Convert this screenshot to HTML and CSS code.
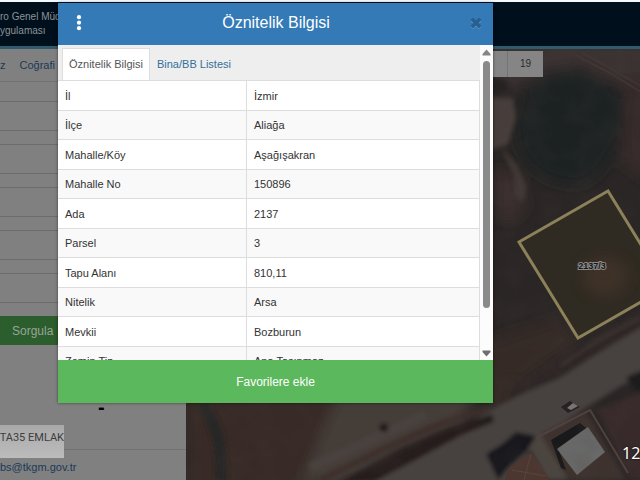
FILE: index.html
```html
<!DOCTYPE html>
<html lang="tr">
<head>
    <meta charset="UTF-8">
    <meta name="viewport" content="width=device-width, initial-scale=1.0">
    <title>Öznitelik Bilgisi</title>
    <link rel="stylesheet" href="styles.css">
</head>
<body>
    <div class="page">
        <header class="site-header">
            <div>ro Genel Müd</div>
            <div>ygulaması</div>
        </header>

        <main class="content">
            <aside class="sidebar">
                <nav class="side-nav">
                    <a href="#">z</a>
                    <a href="#">Coğrafi</a>
                </nav>
                <form class="query-form">
                    <input type="text" aria-label="İl">
                    <input type="text" aria-label="İlçe">
                    <input type="text" aria-label="Mahalle/Köy">
                    <input type="text" aria-label="Ada">
                    <input type="text" aria-label="Parsel">
                    <button type="submit" class="query-button">Sorgula</button>
                </form>
                <div class="result">-</div>
                <footer class="side-footer"><a href="#">bs@tkgm.gov.tr</a></footer>
                <div class="watermark"><span>TA35 EMLAK</span></div>
            </aside>

            <section class="map">
                <svg class="map-canvas" viewBox="186 49 454 431" preserveAspectRatio="xMaxYMin slice" aria-hidden="true">
                    <defs>
                        <filter id="soft" x="-20%" y="-20%" width="140%" height="140%"><feGaussianBlur stdDeviation="7"/></filter>
                        <filter id="edge" x="-20%" y="-20%" width="140%" height="140%"><feGaussianBlur stdDeviation="2"/></filter>
                        <filter id="ground" x="0" y="0" width="100%" height="100%" color-interpolation-filters="sRGB">
                            <feTurbulence type="fractalNoise" baseFrequency="0.04" numOctaves="4" seed="8"/>
                            <feColorMatrix values="0 0 0 0 0.30  0 0 0 0 0.26  0 0 0 0 0.24  1.6 0 0 0 -0.62"/>
                        </filter>
                    </defs>
                    <rect x="186" y="49" width="454" height="431" fill="#2a2625"/>

                    <!-- fields and trees -->
                    <g filter="url(#soft)">
                        <path d="M480 40H660V110L620 84 580 66 540 72 510 92H480Z" fill="#3b3230"/>
                        <path d="M628 75L660 80V190L622 160Z" fill="#372c2b"/>
                        <path d="M524 88C545 66 590 62 622 96C628 130 610 176 580 185C540 186 512 160 516 120Z" fill="#1e2121"/>
                        <path d="M494 170L518 176 526 208 508 222 494 210Z" fill="#3a2f2d"/>
                        <path d="M480 345L560 318 580 342 520 385 480 405Z" fill="#352926"/>
                        <path d="M186 390H330L350 430 300 490H186Z" fill="#372c28"/>
                        <path d="M340 390H480L460 425 400 450 340 485H300Z" fill="#443c39"/>
                    </g>
                    <g filter="url(#edge)">
                        <path d="M490 98L513 98 516 118 508 144 490 150Z" fill="#463d3a"/>
                        <path d="M490 76L506 80 510 90 492 98Z" fill="#252221"/>
                        <path d="M502 149L516 163 526 186 524 202 514 196 514 176Z" fill="#403734"/>

                        <!-- road -->
                        <path d="M650 318L600 352 540 385 494 408 440 440 350 490H510L530 450 550 432 590 405 650 368Z" fill="#474240"/>
                        <path d="M486 380L520 376 508 402 486 408Z" fill="#352b28"/>
                        <path d="M650 304L600 336 560 356 512 390 508 400 560 378 600 352 650 322Z" fill="#2d2725"/>
                        <path d="M640 318L598 340 560 366" fill="none" stroke="#423a37" stroke-width="2"/>
                        <path d="M492 414L450 428 400 450 340 482H374L412 462 460 436 494 422Z" fill="#251f1e"/>
                        <path d="M490 408L440 424 390 446 320 480" fill="none" stroke="#3e2f2b" stroke-width="6"/>
                        <path d="M203 404C217 425 223 450 221 480" fill="none" stroke="#272726" stroke-width="11"/>
                        <path d="M310 468L345 452 425 415" fill="none" stroke="#4a423f" stroke-width="9"/>
                        <circle cx="384" cy="428" r="4" fill="#1c1716"/>
                        <path d="M626 377L648 368V400L634 388Z" fill="#1d1b1c"/>

                        <!-- yards and buildings -->
                        <path d="M598 410L650 388V480H630Z" fill="#372c2a"/>
                        <path d="M528 440L586 412 626 480H544Z" fill="#3c302d"/>
                        <path d="M524 440L540 434 568 480H548Z" fill="#4c4541"/>
                        <path d="M486 454L502 444 516 432 536 436 526 452 508 468 498 480Z" fill="#19191b"/>
                    </g>
                    <path d="M575 55L612 74 650 98M583 53L650 91" fill="none" stroke="#463a37" stroke-width="2" opacity=".6"/>
                    <path d="M531 452L552 484H503L509 468Z" fill="#4c3630"/>
                    <path d="M531 454L524 480M512 470L546 476" stroke="#5c443b" stroke-width="1"/>
                    <path d="M551 440L580 423 586 428 558 448 566 470 561 468Z" fill="#19191b"/>
                    <path d="M536 438L590 410 628 473" fill="none" stroke="#4f423e" stroke-width="2"/>
                    <path d="M557 449L588 427 605 452 577 475Z" fill="#696969"/>
                    <path d="M561 407L570 401 580 407 568 413Z" fill="#242222"/>
                    <path d="M567 408L573 403 578 406 571 410Z" fill="#7a7573"/>

                    <rect x="186" y="49" width="454" height="431" filter="url(#ground)" opacity=".2"/>

                    <!-- parcel -->
                    <path d="M519 242L608 191 667 287 578 338Z" fill="#302b22" fill-opacity=".9"/>
                    <ellipse cx="605" cy="276" rx="24" ry="20" fill="#44342a" opacity=".7" filter="url(#soft)"/>
                    <path d="M519 242L608 191 667 287 578 338Z" fill="none" stroke="#8d8159" stroke-width="3"/>
                    <text class="parcel-label" x="592" y="269">2137/3</text>
                </svg>
                <div class="map-tools">
                    <span class="map-tool"></span>
                    <span class="map-tool zoom-level">19</span>
                </div>
                <div class="map-clock">12</div>
            </section>
        </main>
    </div>

    <div class="overlay">
        <div class="modal" role="dialog" aria-labelledby="modal-title">
            <div class="modal-header">
                <button type="button" class="icon-button" aria-label="Menü">
                    <svg width="6" height="16" viewBox="0 0 6 16" fill="#fff"><circle cx="3" cy="2.2" r="2.1"/><circle cx="3" cy="7.7" r="2.1"/><circle cx="3" cy="13.2" r="2.1"/></svg>
                </button>
                <h2 id="modal-title">Öznitelik Bilgisi</h2>
                <button type="button" class="icon-button" aria-label="Kapat">
                    <svg width="12" height="12" viewBox="0 0 12 12" fill="none" stroke-width="3.6"><path d="M1.7 2.7L10.3 11M10.3 2.7L1.7 11" stroke="#5e9acb"/><path d="M1.7 1.7L10.3 10.3M10.3 1.7L1.7 10.3" stroke="#285f90"/></svg>
                </button>
            </div>

            <div class="modal-body">
                <div class="modal-scroll">
                    <div class="tabs" role="tablist">
                        <button type="button" class="tab active" role="tab">Öznitelik Bilgisi</button>
                        <button type="button" class="tab" role="tab">Bina/BB Listesi</button>
                    </div>
                    <table class="info-table">
                        <tr><td>İl</td><td>İzmir</td></tr>
                        <tr><td>İlçe</td><td>Aliağa</td></tr>
                        <tr><td>Mahalle/Köy</td><td>Aşağışakran</td></tr>
                        <tr><td>Mahalle No</td><td>150896</td></tr>
                        <tr><td>Ada</td><td>2137</td></tr>
                        <tr><td>Parsel</td><td>3</td></tr>
                        <tr><td>Tapu Alanı</td><td>810,11</td></tr>
                        <tr><td>Nitelik</td><td>Arsa</td></tr>
                        <tr><td>Mevkii</td><td>Bozburun</td></tr>
                        <tr><td>Zemin Tip</td><td>Ana Taşınmaz</td></tr>
                    </table>
                </div>
                <div class="scrollbar" aria-hidden="true">
                    <svg width="9" height="7" viewBox="0 0 9 7"><path d="M4.5 0.5L8.5 5V6.5H0.5V5Z" fill="#858585"/></svg>
                    <div class="scroll-thumb"></div>
                    <svg width="9" height="7" viewBox="0 0 9 7"><path d="M4.5 6.5L8.5 2V0.5H0.5V2Z" fill="#6e6e6e"/></svg>
                </div>
            </div>

            <button type="button" class="favorite-button">Favorilere ekle</button>
        </div>
    </div>
</body>
</html>
```
FILE: styles.css
```css
* {
    box-sizing: border-box;
}
body {
    margin: 0;
    font-family: "Liberation Sans", Arial, sans-serif;
    font-size: 11px;
    color: #333;
    overflow: hidden;
}
button {
    font-family: inherit;
    border: none;
    cursor: pointer;
}
a {
    color: #1a3a58;
    text-decoration: none;
}
.page {
    display: flex;
    flex-direction: column;
    min-height: 100vh;
    border-top: 2px solid #f3f9fc;
}
.site-header {
    height: 47px;
    padding-top: 8px;
    background: #000f1c;
    border-bottom: 3px solid #2f5b6c;
    color: #8c9298;
    font-size: 10px;
    line-height: 14px;
}
.content {
    flex: 1;
    display: flex;
}

/* sidebar */
.sidebar {
    position: relative;
    flex: 0 0 186px;
    display: flex;
    flex-direction: column;
    background: #808080;
}
.side-nav {
    display: flex;
    align-items: center;
    gap: 14px;
    height: 33px;
    border-bottom: 1px solid #717171;
}
.query-form {
    display: flex;
    flex-direction: column;
    gap: 13px;
    padding-top: 19px;
}
.query-form input {
    width: 100%;
    height: 30px;
    background: #808080;
    border: 1px solid #6c6c6c;
    border-width: 1px 0;
}
.query-button {
    height: 29px;
    padding: 0 12px;
    background: #2c5d2c;
    color: #97a697;
    font-size: 12px;
    text-align: left;
}
.result {
    padding: 52px 0 0 98px;
    color: #000;
    font-size: 20px;
    line-height: 20px;
    font-weight: bold;
}
.side-footer {
    margin-top: auto;
    height: 31px;
    padding-top: 11px;
    border-top: 1px solid #717171;
}
.watermark {
    position: absolute;
    left: 0;
    bottom: 22px;
    width: 64px;
    height: 33px;
    padding-top: 3px;
    display: flex;
    justify-content: flex-end;
    overflow: hidden;
    background: linear-gradient(#a9a9a9, #bcbcbc);
    color: #3d3d3d;
    font-family: Roboto, sans-serif;
    font-size: 11px;
    line-height: 20px;
    white-space: nowrap;
}

/* map */
.map {
    position: relative;
    flex: 1;
    overflow: hidden;
    background: #2a2625;
}
.map-canvas {
    display: block;
    width: 100%;
    height: 100%;
}
.parcel-label {
    font-size: 9px;
    font-weight: bold;
    text-anchor: middle;
    fill: #151515;
    stroke: #8a8a88;
    stroke-width: 2px;
    paint-order: stroke;
}
.map-tools {
    position: absolute;
    top: 2px;
    right: 97px;
    display: flex;
    height: 26px;
    background: #858585;
}
.map-tool {
    width: 36px;
    line-height: 26px;
    text-align: center;
    color: #2a2a2a;
}
.zoom-level {
    border-left: 1px solid #747474;
    font-size: 10px;
}
.map-clock {
    position: absolute;
    left: calc(100% - 18px);
    bottom: 16px;
    color: #fff;
    font-family: "Noto Sans", sans-serif;
    font-size: 16px;
    line-height: 22px;
    text-shadow: 0 0 2px #000;
}

/* attribute dialog */
.overlay {
    position: absolute;
    top: 0;
    left: 0;
    right: 0;
    padding: 3px 147px 0 58px;
}
.modal {
    display: flex;
    flex-direction: column;
    background: #fff;
    box-shadow: 0 0 3px rgba(0, 0, 0, 0.5);
}
.modal-header {
    display: flex;
    align-items: center;
    justify-content: space-between;
    height: 42px;
    padding: 0 11px 2px 18px;
    background: #337ab7;
    color: #fff;
}
.modal-header h2 {
    margin: 0;
    font-size: 16px;
    font-weight: normal;
}
.icon-button {
    display: flex;
    padding: 0;
    background: none;
}
.modal-body {
    display: flex;
    height: 315px;
}
.modal-scroll {
    flex: 1;
    overflow: hidden;
}
.tabs {
    display: flex;
    height: 36px;
    padding: 3px 4px 0;
    background: #eee;
    border-bottom: 1px solid #ddd;
}
.tab {
    padding: 0 7px;
    background: none;
    color: #337099;
    font-size: 11px;
}
.tab.active {
    background: #fff;
    color: #555;
    border: 1px solid #ddd;
    border-bottom: none;
    padding: 0 6px 1px;
}
.info-table {
    width: 100%;
    table-layout: fixed;
    border-collapse: separate;
    border-spacing: 0;
}
.info-table tr {
    height: 29px;
}
.info-table tr:nth-child(odd) {
    height: 30px;
}
.info-table tr:nth-child(even) {
    background: #f9f9f9;
}
.info-table td {
    padding: 0 7px;
    border-bottom: 1px solid #ddd;
    border-right: 1px solid #ddd;
}
.info-table td:first-child {
    width: 189px;
}
.scrollbar {
    flex: 0 0 13px;
    display: flex;
    flex-direction: column;
    align-items: center;
    gap: 5px;
    padding: 4px 0 3px;
    background: #fcfcfc;
}
.scroll-thumb {
    width: 7px;
    height: 247px;
    margin-bottom: auto;
    border-radius: 4px;
    background: #8a8a8a;
}
.favorite-button {
    height: 43px;
    background: #5cb85c;
    color: #fff;
    font-size: 12px;
}
```
